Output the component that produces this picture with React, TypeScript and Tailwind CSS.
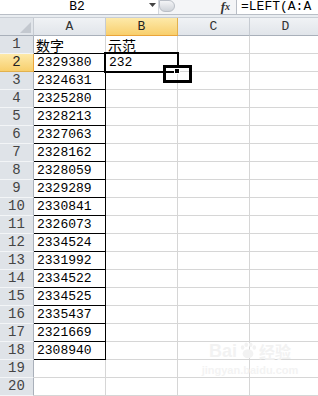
import React from 'react'

const nums = [
  '2329380', '2324631', '2325280', '2328213', '2327063', '2328162', '2328059', '2329289',
  '2330841', '2326073', '2334524', '2331992', '2334522', '2334525', '2335437', '2321669', '2308940',
]

const mono = "font-['Liberation_Mono','Noto_Sans_CJK_SC',monospace]"
const cjk = "font-['Noto_Sans_CJK_SC',sans-serif]"

function ColHeader({ label, active }: { label: string; active?: boolean }) {
  return (
    <div
      className={`flex items-center justify-center border-r border-b text-[13px] ${mono} ${
        active
          ? 'bg-gradient-to-b from-[#fde9a9] to-[#f8cf6c] border-r-[#e2b14d] border-b-[#eaa43a] text-[#222]'
          : 'bg-gradient-to-b from-[#f0f2f5] to-[#e1e5ea] border-r-[#c6cbd2] border-b-[#a9b0ba] text-[#333]'
      }`}
    >
      {label}
    </div>
  )
}

function RowHeader({ n, active }: { n: number; active?: boolean }) {
  return (
    <div
      className={`flex items-center justify-center border-r border-b text-[14px] ${mono} ${
        active
          ? 'bg-gradient-to-b from-[#fde9a9] to-[#f8cf6c] border-r-[#eaa43a] border-b-[#e2b14d] text-[#222]'
          : 'bg-[#dfe3e8] border-r-[#a9b0ba] border-b-[#f3f5f7] text-[#444]'
      }`}
    >
      {n}
    </div>
  )
}

export default function App() {
  const rows = Array.from({ length: 20 }, (_, i) => i + 1)

  return (
    <div className="relative w-[318px] h-[396px] overflow-hidden bg-white">
      {/* formula bar */}
      <div className="flex h-[15px] border-b border-[#b9bec6] bg-white">
        <div className={`w-[146px] flex justify-center pl-[8px] text-[13px] leading-[13px] ${mono}`}>B2</div>
        <div className="w-[12px] flex justify-center pt-[3px]">
          <svg width="7" height="4" viewBox="0 0 7 4">
            <polygon points="0,0 7,0 3.5,4" fill="#444" />
          </svg>
        </div>
        <div className="w-[78px] flex items-start bg-[#f4f5f7] border-l border-[#d4d8de]">
          <div className="w-[16px] h-[12px] rounded-b-full rounded-r-full bg-gradient-to-b from-[#f3f4f6] to-[#cfd3d9] border border-[#b9bec6]" />
          <div className="flex-1 flex justify-end pr-[6px] text-[13px] leading-[13px] italic font-bold font-['Liberation_Serif',serif] text-[#333]">
            f<span className="text-[10px]">x</span>
          </div>
        </div>
        <div className={`flex-1 border-l border-[#b9bec6] pl-[4px] text-[13px] leading-[13px] whitespace-nowrap ${mono}`}>
          =LEFT(A:A
        </div>
      </div>
      <div className="h-[3px] bg-[#e9edf1] border-b border-[#c9ced5]" />

      {/* sheet */}
      <div className="relative grid grid-cols-[34px_72px_72px_72px_72px] auto-rows-[18px]">
        <div className="relative bg-[#e1e5ea] border-r border-b border-r-[#c6cbd2] border-b-[#a9b0ba]">
          <svg className="absolute right-[2px] bottom-[2px]" width="11" height="11" viewBox="0 0 11 11">
            <polygon points="11,0 11,11 0,11" fill="#c3c8cf" />
          </svg>
        </div>
        <ColHeader label="A" />
        <ColHeader label="B" active />
        <ColHeader label="C" />
        <ColHeader label="D" />

        {rows.map((r) => {
          const inData = r >= 2 && r <= 18
          return (
            <React.Fragment key={r}>
              <RowHeader n={r} active={r === 2} />
              <div
                className={`flex items-center whitespace-nowrap border-r border-b ${
                  r <= 18 ? 'border-b-black' : 'border-b-[#d6d6d6]'
                } ${inData ? 'border-r-black' : 'border-r-[#d6d6d6]'} ${
                  r === 1 ? `pl-[2px] text-[14px] leading-[16px] ${cjk}` : `pl-[3px] text-[13px] leading-[16px] ${mono}`
                } text-black`}
              >
                {r === 1 ? '数字' : inData ? nums[r - 2] : ''}
              </div>
              <div
                className={`flex items-center whitespace-nowrap border-r border-b border-[#d6d6d6] ${
                  r === 1 ? `pl-[2px] text-[14px] leading-[16px] ${cjk}` : `pl-[3px] text-[13px] leading-[16px] ${mono}`
                } text-black`}
              >
                {r === 1 ? '示范' : r === 2 ? '232' : ''}
              </div>
              <div className="border-r border-b border-[#d6d6d6]" />
              <div className="border-r border-b border-[#d6d6d6]" />
            </React.Fragment>
          )
        })}

        {/* selection on B2 */}
        <div className="absolute left-[104px] top-[34px] w-[75px] h-[21px] border-2 border-black pointer-events-none" />
        {/* fill handle */}
        <div className="absolute left-[174px] top-[50px] w-[6px] h-[6px] bg-black border border-white" />
        {/* annotation box */}
        <div className="absolute left-[163px] top-[47px] w-[29px] h-[18px] border-[3px] border-black" />
      </div>

      {/* watermark */}
      <div className="absolute left-[200px] top-[342px] w-[100px] flex flex-col items-center pointer-events-none">
        <div className="flex items-end gap-[2px] text-[#f2f2f2] font-['Liberation_Sans',sans-serif] font-bold text-[18px] leading-[18px]">
          <span>Bai</span>
          <svg width="18" height="18" viewBox="0 0 20 20">
            <ellipse cx="10" cy="13" rx="6" ry="5" fill="#f2f2f2" />
            <ellipse cx="4" cy="6" rx="2" ry="2.5" fill="#f2f2f2" />
            <ellipse cx="8" cy="3" rx="2" ry="2.5" fill="#f2f2f2" />
            <ellipse cx="13" cy="3" rx="2" ry="2.5" fill="#f2f2f2" />
            <ellipse cx="17" cy="6" rx="2" ry="2.5" fill="#f2f2f2" />
          </svg>
          <span className={`${cjk} text-[16px]`}>经验</span>
        </div>
        <div className="text-[11px] leading-[12px] text-[#f3f3f3] font-['Liberation_Sans',sans-serif] font-bold mt-[4px]">
          jingyan.baidu.com
        </div>
      </div>
    </div>
  )
}
